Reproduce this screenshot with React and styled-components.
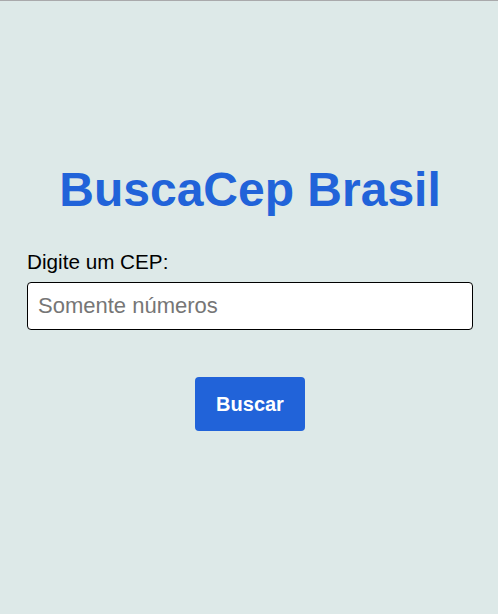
import React from "react";
import styled, { createGlobalStyle } from "styled-components";

const GlobalStyle = createGlobalStyle`
  html, body {
    margin: 0;
    padding: 0;
    background: #dde9e8;
  }
  * { box-sizing: border-box; }
`;

const Page = styled.div`
  min-height: 100vh;
  background: #dde9e8;
  border-top: 1px solid #a9a9ab;
  font-family: "Liberation Sans", Arial, sans-serif;
`;

const Container = styled.main`
  width: 446px;
  margin-left: 27px;
  padding-top: 161px;
  display: flex;
  flex-direction: column;
`;

const Title = styled.h1`
  margin: 0;
  font-size: 48px;
  line-height: 56px;
  font-weight: 700;
  color: #2163d9;
  text-align: center;
`;

const Label = styled.label`
  margin-top: 32px;
  font-size: 20.7px;
  line-height: 24px;
  color: #000;
`;

const Input = styled.input`
  margin-top: 8px;
  width: 100%;
  height: 48px;
  padding: 0 10px;
  border: 1px solid #000;
  border-radius: 4px;
  background: #fff;
  font-family: "Liberation Sans", Arial, sans-serif;
  font-size: 22px;
  color: #000;
  outline: none;
  &::placeholder {
    color: #767676;
  }
`;

const Button = styled.button`
  align-self: center;
  margin-top: 47px;
  height: 54px;
  padding: 0 21px;
  border: none;
  border-radius: 4px;
  background: #2163d9;
  color: #fff;
  font-family: "Liberation Sans", Arial, sans-serif;
  font-size: 20px;
  font-weight: 700;
  line-height: 24px;
  cursor: pointer;
`;

export default function App() {
  return (
    <>
      <GlobalStyle />
      <Page>
        <Container>
          <Title>BuscaCep Brasil</Title>
          <Label htmlFor="cep">Digite um CEP:</Label>
          <Input id="cep" placeholder="Somente números" />
          <Button>Buscar</Button>
        </Container>
      </Page>
    </>
  );
}
